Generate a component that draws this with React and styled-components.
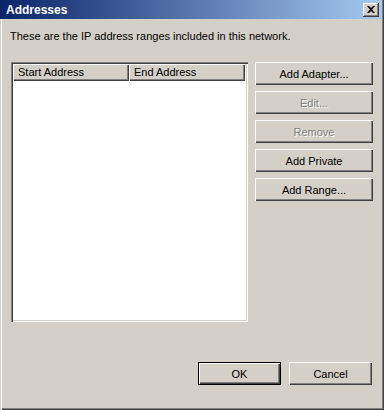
import React from 'react'
import styled, { createGlobalStyle } from 'styled-components'

const Global = createGlobalStyle`
  html, body { margin: 0; padding: 0; background: #d4d0c8; }
  * { box-sizing: border-box; }
`

const Window = styled.div`
  width: 384px;
  height: 410px;
  background: #d4d0c8;
  display: flex;
  flex-direction: column;
  font-family: "Liberation Sans", Tahoma, sans-serif;
  font-size: 11px;
  color: #000;
  box-shadow: inset 1px 0 #d4d0c8, inset 2px 0 #fff, inset -1px -1px #404040, inset -2px -2px #808080;
  padding: 0 2px 2px 0;
`

const TitleBar = styled.div`
  height: 19px;
  display: flex;
  align-items: center;
  justify-content: space-between;
  padding: 0 3px 0 6px;
  background: linear-gradient(to right, #0a246a, #a6caf0);
  color: #fff;
  font-weight: bold;
  font-size: 12px;
`

const CloseButton = styled.div`
  width: 16px;
  height: 14px;
  background: #d4d0c8;
  box-shadow: inset -1px -1px #404040, inset 1px 1px #fff, inset -2px -2px #808080;
  display: flex;
  align-items: center;
  justify-content: center;
`

const Body = styled.div`
  flex: 1;
  display: flex;
  flex-direction: column;
  padding: 10px 8px 23px 10px;
`

const Intro = styled.div`
  height: 33px;
  padding-top: 1px;
`

const Main = styled.div`
  display: flex;
  gap: 7px;
`

const List = styled.div`
  width: 237px;
  height: 260px;
  margin-left: 1px;
  background: #fff;
  box-shadow: inset 1px 1px #808080, inset 2px 2px #404040, inset -1px -1px #fff, inset -2px -2px #d4d0c8;
  padding: 2px;
`

const Header = styled.div`
  display: flex;
  height: 17px;
`

const HeaderCell = styled.div`
  width: ${p => p.$w}px;
  background: #d4d0c8;
  box-shadow: inset 1px 1px #fff, inset -1px -1px #404040, inset -2px -2px #808080;
  padding: 2px 0 0 5px;
`

const Buttons = styled.div`
  display: flex;
  flex-direction: column;
  gap: 6px;
`

const Button = styled.div`
  width: ${p => p.$w || 118}px;
  height: 23px;
  display: flex;
  align-items: center;
  justify-content: center;
  background: #d4d0c8;
  color: ${p => (p.$disabled ? '#808080' : '#000')};
  text-shadow: ${p => (p.$disabled ? '1px 1px #fff' : 'none')};
  box-shadow: ${p =>
    p.$default
      ? 'inset 0 0 0 1px #000, inset 2px 2px #fff, inset -2px -2px #404040, inset -3px -3px #808080'
      : 'inset 1px 1px #fff, inset -1px -1px #404040, inset -2px -2px #808080'};
`

const Footer = styled.div`
  margin-top: auto;
  display: flex;
  justify-content: flex-end;
  gap: 8px;
  padding-right: 2px;
`

const App = () => {
  return (
    <Window>
      <Global />
      <TitleBar>
        <span>Addresses</span>
        <CloseButton>
          <svg width="8" height="7" viewBox="0 0 8 7">
            <path d="M0 0h2l2 2 2-2h2L5 3.5 8 7H6L4 5 2 7H0l3-3.5z" fill="#000" />
          </svg>
        </CloseButton>
      </TitleBar>
      <Body>
        <Intro>These are the IP address ranges included in this network.</Intro>
        <Main>
          <List>
            <Header>
              <HeaderCell $w={116}>Start Address</HeaderCell>
              <HeaderCell $w={116}>End Address</HeaderCell>
            </Header>
          </List>
          <Buttons>
            <Button>Add Adapter...</Button>
            <Button $disabled>Edit...</Button>
            <Button $disabled>Remove</Button>
            <Button>Add Private</Button>
            <Button>Add Range...</Button>
          </Buttons>
        </Main>
        <Footer>
          <Button $w={83} $default>OK</Button>
          <Button $w={83}>Cancel</Button>
        </Footer>
      </Body>
    </Window>
  )
}

export default App
